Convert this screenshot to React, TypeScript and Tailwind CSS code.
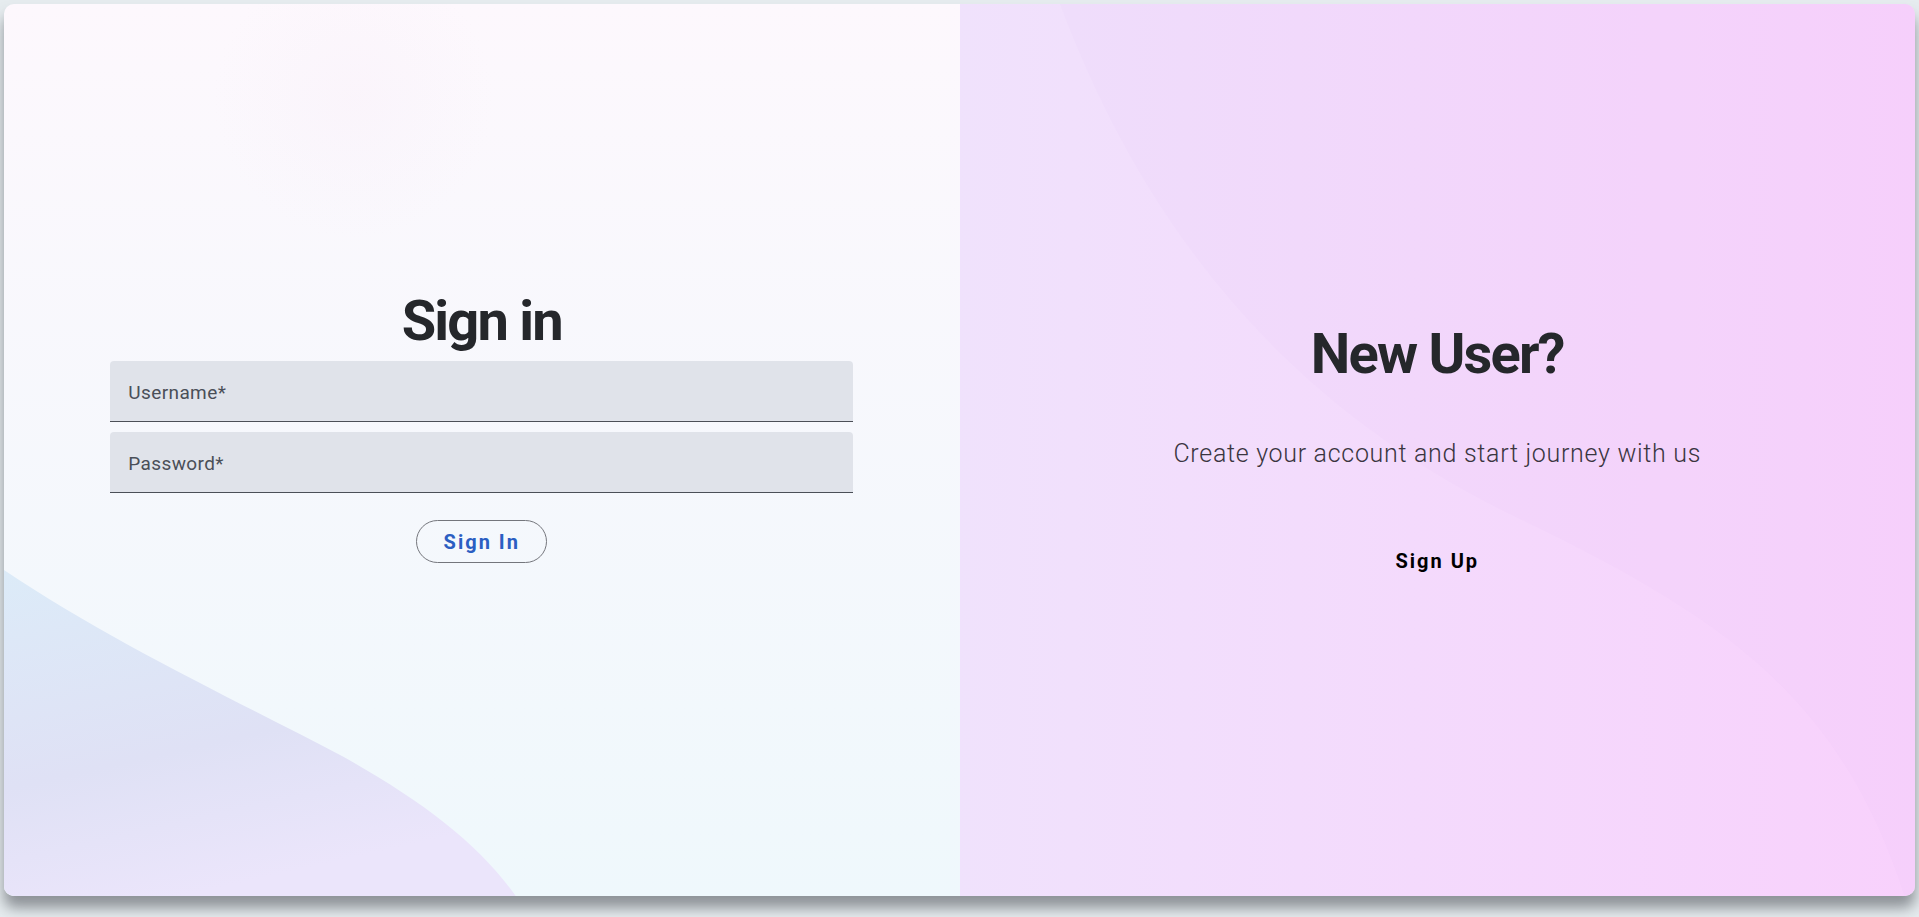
import { useState } from 'react'

const FONT = { fontFamily: 'Roboto, "Noto Sans", Arial, sans-serif' }

function Field({ label, type = 'text' }: { label: string; type?: string }) {
  const [value, setValue] = useState('')
  return (
    <label className="relative flex h-[61px] w-full items-center rounded-t-[4px] border-b border-[#4b4f57] bg-[#e0e3ea] px-[18px] pt-[3px]">
      {!value && (
        <span className="pointer-events-none absolute left-[18px] text-[19px] leading-none tracking-[0.4px] text-[#4a4f58]">
          {label}
        </span>
      )}
      <input
        type={type}
        value={value}
        onChange={(e) => setValue(e.target.value)}
        className="w-full bg-transparent text-[18px] text-[#25272b] outline-none"
      />
    </label>
  )
}

export default function App() {
  return (
    <div style={FONT} className="h-screen w-full overflow-hidden bg-[#e6ecef] px-[4px] pt-[4px]">
      <div className="flex h-[892px] w-full overflow-hidden rounded-[10px] shadow-[0_12px_14px_rgba(70,72,80,0.55)]">
        {/* Sign in side */}
        <div className="relative flex w-1/2 flex-col items-center bg-gradient-to-b from-[#fdf8fd] to-[#eff8fc] pt-[289px]">
          <svg className="absolute inset-0 h-full w-full" viewBox="0 0 956 892" preserveAspectRatio="none">
            <defs>
              <linearGradient id="wave" x1="0" y1="0" x2="0.35" y2="1">
                <stop offset="0" stopColor="#dcebf8" />
                <stop offset="0.6" stopColor="#dfe1f5" />
                <stop offset="1" stopColor="#ebe5fb" />
              </linearGradient>
              <radialGradient id="blob" cx="0.5" cy="0.5" r="0.5">
                <stop offset="0" stopColor="#f8eef8" stopOpacity="0.35" />
                <stop offset="1" stopColor="#f8eef8" stopOpacity="0" />
              </radialGradient>
            </defs>
            <circle cx="350" cy="95" r="140" fill="url(#blob)" />
            <path d="M0,566 C110,640 240,700 340,753 C420,798 475,840 512,892 L0,892 Z" fill="url(#wave)" />
          </svg>

          <div className="relative flex w-[743px] flex-col items-center">
            <h1 className="text-[56px] font-bold leading-none tracking-[-1.8px] text-[#25272b]">Sign in</h1>
            <form className="mt-[12px] flex w-full flex-col gap-[10px]" onSubmit={(e) => e.preventDefault()}>
              <Field label="Username*" />
              <Field label="Password*" type="password" />
              <button
                type="submit"
                className="mx-auto mt-[17px] h-[43px] w-[131px] rounded-full border border-[#74767c] text-[20px] font-bold tracking-[2px] text-[#2b5ec2]"
              >
                Sign In
              </button>
            </form>
          </div>
        </div>

        {/* Sign up side */}
        <div className="relative flex w-1/2 flex-col items-center bg-gradient-to-r from-[#f0e2fc] to-[#f8d1fc] pt-[322px]">
          <svg className="absolute inset-0 h-full w-full" viewBox="0 0 956 892" preserveAspectRatio="none">
            <path
              d="M100,0 C190,240 340,410 560,515 C760,612 880,690 945,892 L956,892 L956,0 Z"
              fill="#b77fd8"
              fillOpacity="0.025"
            />
          </svg>
          <div className="relative flex flex-col items-center">
            <h2 className="text-[56px] font-bold leading-none tracking-[-1.8px] text-[#25272b]">New User?</h2>
            <p className="mt-[59px] text-[25px] font-light leading-none tracking-[0.7px] text-[#3a3540]">
              Create your account and start journey with us
            </p>
            <button className="mt-[85px] text-[20px] font-bold leading-none tracking-[2px] text-black">
              Sign Up
            </button>
          </div>
        </div>
      </div>
    </div>
  )
}
